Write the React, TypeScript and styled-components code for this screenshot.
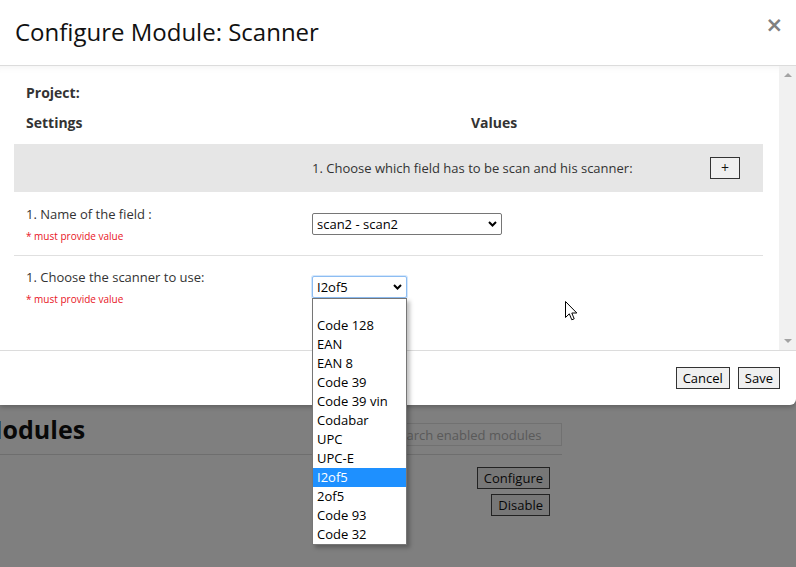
import React from "react";
import styled, { createGlobalStyle } from "styled-components";

const GlobalStyle = createGlobalStyle`
  html, body { margin: 0; padding: 0; }
  body {
    font-family: "Open Sans", "Liberation Sans", sans-serif;
    background: #fff;
    width: 796px;
    height: 567px;
    overflow: hidden;
  }
  * { box-sizing: border-box; }
`;

const Screen = styled.div`
  position: relative;
  width: 796px;
  height: 567px;
  overflow: hidden;
`;

/* ---------- background page ---------- */
const BgPage = styled.div`
  padding-top: 412px;
  width: 562px;
`;

const BgHeaderRow = styled.div`
  display: flex;
  justify-content: space-between;
  align-items: flex-start;
  height: 43px;
  border-bottom: 1px solid #ddd;
`;

const BgHeading = styled.h2`
  margin: 0 0 0 -21px;
  font-size: 25px;
  font-weight: 700;
  line-height: 34px;
  color: #111;
`;

const SearchInput = styled.input`
  margin-top: 11px;
  width: 179px;
  height: 23px;
  border: 1px solid #e2e2e2;
  padding: 0 5px 0 8px;
  font-family: "Open Sans", sans-serif;
  font-size: 13px;
  background: #fff;
  &::placeholder { color: #b4b4b4; }
`;

const BgActions = styled.div`
  display: flex;
  flex-direction: column;
  align-items: flex-end;
  gap: 5px;
  padding: 12px 12px 0 0;
`;

const PlainButton = styled.button`
  height: 22px;
  padding: 0 6px;
  font-family: "Open Sans", sans-serif;
  font-size: 13px;
  line-height: 20px;
  color: #111;
  background: #efefef;
  border: 1px solid #444;
  border-radius: 0;
`;

const Overlay = styled.div`
  position: absolute;
  inset: 0;
  background: rgba(0, 0, 0, 0.5);
`;

/* ---------- modal ---------- */
const Modal = styled.div`
  position: absolute;
  top: 0;
  left: 0;
  width: 796px;
  height: 405px;
  background: #fff;
  border-bottom-right-radius: 6px;
  display: flex;
  flex-direction: column;
  box-shadow: 0 2px 5px rgba(0, 0, 0, 0.25);
`;

const ModalHeader = styled.div`
  height: 66px;
  flex: none;
  display: flex;
  justify-content: space-between;
  align-items: center;
  padding: 0 13px 3px 15px;
  border-bottom: 1px solid #dcdcdc;
`;

const Title = styled.h4`
  margin: 0;
  font-size: 24px;
  font-weight: 400;
  color: #111;
`;

const CloseButton = styled.span`
  align-self: flex-start;
  margin-top: 14px;
  font-size: 21px;
  font-weight: 700;
  line-height: 22px;
  color: #808080;
  font-family: "DejaVu Sans", "Open Sans", sans-serif;
`;

const ModalBody = styled.div`
  height: 284px;
  flex: none;
  display: flex;
  box-shadow: inset 0 8px 8px -8px rgba(0, 0, 0, 0.07);
`;

const BodyContent = styled.div`
  flex: 1;
  padding: 17px 16px 0 14px;
  color: #333;
`;

const ScrollTrack = styled.div`
  width: 17px;
  background: #f1f1f1;
  display: flex;
  flex-direction: column;
  justify-content: space-between;
  align-items: center;
  padding: 7px 0 7px;
`;

const Arrow = styled.div<{ $down?: boolean }>`
  width: 0;
  height: 0;
  border-left: 4px solid transparent;
  border-right: 4px solid transparent;
  ${(p) =>
    p.$down
      ? "border-top: 4px solid #a3a3a3;"
      : "border-bottom: 4px solid #a3a3a3;"}
`;

const ProjectLine = styled.div`
  padding-left: 12px;
  font-size: 14px;
  font-weight: 700;
  line-height: 20px;
  margin-bottom: 10px;
`;

const TwoCols = styled.div`
  display: grid;
  grid-template-columns: 298px 1fr;
`;

const SettingsHead = styled(TwoCols)`
  font-size: 14px;
  font-weight: 700;
  line-height: 20px;
  margin-bottom: 11px;
`;

const HeadCell = styled.div<{ $indent: number }>`
  padding-left: ${(p) => p.$indent}px;
`;

const SectionRow = styled(TwoCols)`
  height: 48px;
  background: #e6e6e6;
  align-items: center;
  font-size: 13px;
`;

const SectionValue = styled.div`
  display: flex;
  justify-content: space-between;
  align-items: center;
  padding-right: 23px;
`;

const PlusButton = styled(PlainButton)`
  width: 30px;
  padding: 0;
  border-color: #333;
  font-size: 14px;
`;

const FieldRow = styled(TwoCols)<{ $divider?: boolean; $top: number }>`
  height: 64px;
  border-bottom: ${(p) => (p.$divider ? "1px solid #e0e0e0" : "none")};
  & > div:last-child {
    padding-top: ${(p) => p.$top}px;
  }
`;

const FieldLabel = styled.div<{ $top: number }>`
  padding: ${(p) => p.$top}px 0 0 12px;
`;

const LabelText = styled.div`
  font-size: 13px;
  line-height: 18px;
  color: #333;
`;

const Required = styled.div`
  margin-top: 6px;
  font-size: 10px;
  line-height: 14px;
  color: #e8141e;
`;

const FieldValue = styled.div``;

const SelectBox = styled.div<{ $width: number; $focused?: boolean }>`
  position: relative;
  width: ${(p) => p.$width}px;
  height: 22px;
  border: 1px solid ${(p) => (p.$focused ? "#8dbdf2" : "#767676")};
  box-shadow: ${(p) => (p.$focused ? "0 0 0 1px #d4e7fc" : "none")};
  border-radius: 2px;
  background: #fff;
  display: flex;
  align-items: center;
  justify-content: space-between;
  padding: 0 4px 0 4px;
  font-size: 13px;
  line-height: 20px;
  color: #000;
`;

const Chevron = () => (
  <svg width="9" height="6" viewBox="0 0 9 6">
    <path d="M1 1 L4.5 4.5 L8 1" fill="none" stroke="#000" strokeWidth="2" />
  </svg>
);

const DropList = styled.div`
  position: absolute;
  top: 21px;
  left: -1px;
  width: 95px;
  border: 1px solid #767676;
  background: #fff;
  box-shadow: 3px 3px 4px rgba(0, 0, 0, 0.25);
  z-index: 10;
`;

const DropItem = styled.div<{ $selected?: boolean; $blank?: boolean }>`
  height: ${(p) => (p.$blank ? 17 : 19)}px;
  line-height: 19px;
  padding-left: 4px;
  font-size: 13px;
  color: ${(p) => (p.$selected ? "#fff" : "#000")};
  background: ${(p) => (p.$selected ? "#1e90ff" : "#fff")};
  white-space: nowrap;
`;

const ModalFooter = styled.div`
  flex: 1;
  display: flex;
  justify-content: flex-end;
  align-items: center;
  gap: 8px;
  padding-right: 16px;
  border-top: 1px solid #dcdcdc;
`;

const FooterButton = styled(PlainButton)`
  border-color: #333;
  color: #000;
`;

const Cursor = styled.svg`
  position: absolute;
  left: 565px;
  top: 301px;
  z-index: 20;
`;

const scanners = [
  "Code 128",
  "EAN",
  "EAN 8",
  "Code 39",
  "Code 39 vin",
  "Codabar",
  "UPC",
  "UPC-E",
  "I2of5",
  "2of5",
  "Code 93",
  "Code 32",
];

export default function App() {
  return (
    <Screen>
      <GlobalStyle />
      <BgPage>
        <BgHeaderRow>
          <BgHeading>Modules</BgHeading>
          <SearchInput placeholder="Search enabled modules" readOnly />
        </BgHeaderRow>
        <BgActions>
          <PlainButton>Configure</PlainButton>
          <PlainButton>Disable</PlainButton>
        </BgActions>
      </BgPage>
      <Overlay />
      <Modal>
        <ModalHeader>
          <Title>Configure Module: Scanner</Title>
          <CloseButton>×</CloseButton>
        </ModalHeader>
        <ModalBody>
          <BodyContent>
            <ProjectLine>Project:</ProjectLine>
            <SettingsHead>
              <HeadCell $indent={12}>Settings</HeadCell>
              <HeadCell $indent={159}>Values</HeadCell>
            </SettingsHead>
            <SectionRow>
              <div />
              <SectionValue>
                <span>1. Choose which field has to be scan and his scanner:</span>
                <PlusButton>+</PlusButton>
              </SectionValue>
            </SectionRow>
            <FieldRow $divider $top={21}>
              <FieldLabel $top={13}>
                <LabelText>1. Name of the field :</LabelText>
                <Required>* must provide value</Required>
              </FieldLabel>
              <FieldValue>
                <SelectBox $width={190}>
                  <span>scan2 - scan2</span>
                  <Chevron />
                </SelectBox>
              </FieldValue>
            </FieldRow>
            <FieldRow $top={20}>
              <FieldLabel $top={12}>
                <LabelText>1. Choose the scanner to use:</LabelText>
                <Required>* must provide value</Required>
              </FieldLabel>
              <FieldValue>
                <SelectBox $width={95} $focused>
                  <span>I2of5</span>
                  <Chevron />
                  <DropList>
                    <DropItem $blank />
                    {scanners.map((s) => (
                      <DropItem key={s} $selected={s === "I2of5"}>
                        {s}
                      </DropItem>
                    ))}
                  </DropList>
                </SelectBox>
              </FieldValue>
            </FieldRow>
          </BodyContent>
          <ScrollTrack>
            <Arrow />
            <Arrow $down />
          </ScrollTrack>
        </ModalBody>
        <ModalFooter>
          <FooterButton>Cancel</FooterButton>
          <FooterButton>Save</FooterButton>
        </ModalFooter>
      </Modal>
      <Cursor width="13" height="20" viewBox="0 0 13 20">
        <path
          d="M0.5 0.5 L0.5 16.5 L4.3 12.8 L6.8 18.8 L9.2 17.8 L6.8 12 L11.8 12 Z"
          fill="#fff"
          stroke="#000"
          strokeWidth="1"
          strokeLinejoin="miter"
        />
      </Cursor>
    </Screen>
  );
}
